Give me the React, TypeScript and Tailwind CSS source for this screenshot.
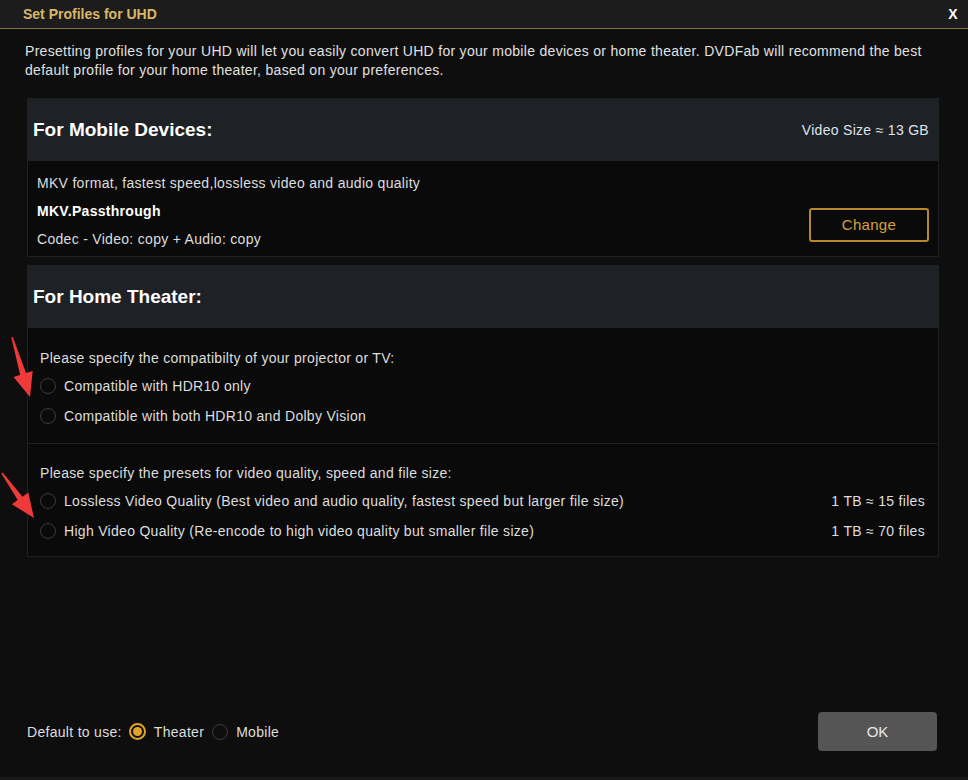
import React from "react";

const font = { fontFamily: '"Liberation Sans", Arial, sans-serif' };

function Radio({ checked = false }: { checked?: boolean }) {
  if (checked) {
    return (
      <span className="flex h-[17px] w-[17px] shrink-0 items-center justify-center rounded-full border-2 border-[#e0a526]">
        <span className="h-[9px] w-[9px] rounded-full bg-[#e0a526]" />
      </span>
    );
  }
  return <span className="block h-[16px] w-[16px] shrink-0 rounded-full border border-[#3c3c3c]" />;
}

function Option({ label, right }: { label: string; right?: string }) {
  return (
    <div className="flex h-[30px] items-center">
      <Radio />
      <span className="ml-[8px] flex-1">{label}</span>
      {right && <span className="mr-[1px]">{right}</span>}
    </div>
  );
}

export default function App() {
  return (
    <div
      className="relative flex h-[780px] w-[968px] flex-col overflow-hidden bg-[#0e0e0e] text-[14px] leading-[20px] tracking-[0.3px] text-[#dedede]"
      style={font}
    >
      {/* title bar */}
      <div className="flex h-[29px] shrink-0 items-center justify-between border-b border-[#8c7441] bg-[#1c1c1c] pl-[23px] pr-[10px]">
        <span className="text-[14px] font-bold tracking-normal text-[#d9b768]">Set Profiles for UHD</span>
        <span className="text-[14px] font-bold text-white">X</span>
      </div>

      <p className="mt-[13px] pl-[25px] pr-[30px] leading-[19px] text-[#e0e0e0]">
        Presetting profiles for your UHD will let you easily convert UHD for your mobile devices or home theater. DVDFab will recommend the best default profile for your home theater, based on your preferences.
      </p>

      {/* mobile panel */}
      <div className="mx-[27px] mt-[18px] w-[912px] border border-[#1d2126] bg-[#0a0a0a]">
        <div className="flex h-[62px] items-center justify-between bg-[#1e2126] pl-[5px] pr-[9px]">
          <span className="text-[19px] font-bold tracking-normal text-white">For Mobile Devices:</span>
          <span className="text-[#dfe3ea]">Video Size ≈ 13 GB</span>
        </div>
        <div className="flex justify-between pb-[7px] pl-[9px] pr-[9px] pt-[12px]">
          <div className="flex flex-col gap-[8px]">
            <span>MKV format, fastest speed,lossless video and audio quality</span>
            <span className="font-bold text-white">MKV.Passthrough</span>
            <span>Codec - Video: copy + Audio: copy</span>
          </div>
          <button className="mb-[7px] h-[34px] w-[120px] self-end rounded-[3px] border-2 border-[#b8892b] text-[15px] text-[#d6a23a]">
            Change
          </button>
        </div>
      </div>

      {/* home theater panel */}
      <div className="mx-[27px] mt-[8px] w-[912px] border border-[#1d2126] bg-[#0a0a0a]">
        <div className="flex h-[62px] items-center bg-[#1e2126] pl-[5px]">
          <span className="text-[19px] font-bold tracking-normal text-white">For Home Theater:</span>
        </div>
        <div className="border-b border-[#1d2126] pb-[12px] pl-[12px] pr-[12px] pt-[20px]">
          <div className="mb-[3px]">Please specify the compatibilty of your projector or TV:</div>
          <Option label="Compatible with HDR10 only" />
          <Option label="Compatible with both HDR10 and Dolby Vision" />
        </div>
        <div className="pb-[10px] pl-[12px] pr-[12px] pt-[19px]">
          <div className="mb-[3px]">Please specify the presets for video quality, speed and file size:</div>
          <Option
            label="Lossless Video Quality (Best video and audio quality, fastest speed but larger file size)"
            right="1 TB ≈ 15 files"
          />
          <Option
            label="High Video Quality (Re-encode to high video quality but smaller file size)"
            right="1 TB ≈ 70 files"
          />
        </div>
      </div>

      {/* footer */}
      <div className="mt-auto flex items-center justify-between border-b-[3px] border-[#1a1a1a] pb-[26px] pl-[27px] pr-[31px]">
        <div className="flex items-center">
          <span>Default to use:</span>
          <span className="ml-[7px] flex"><Radio checked /></span>
          <span className="ml-[8px]">Theater</span>
          <span className="ml-[8px] flex"><Radio /></span>
          <span className="ml-[8px]">Mobile</span>
        </div>
        <button className="h-[39px] w-[119px] rounded-[4px] bg-[#555555] text-[15px] tracking-normal text-[#e8e8e8]">OK</button>
      </div>

      {/* red annotation arrows */}
      <svg className="absolute left-0 top-[330px] h-[200px] w-[60px]" viewBox="0 0 60 200" fill="#f03a3a">
        <polygon points="11.3,7.2 12.7,6.8 26,43.1 32.7,41.1 30,67 13.5,46.9 20.2,44.9" />
        <polygon points="1.4,143.4 2.6,142.6 22.5,166.7 28.3,162.6 34,188 11.9,174.2 17.7,170.1" />
      </svg>
    </div>
  );
}
